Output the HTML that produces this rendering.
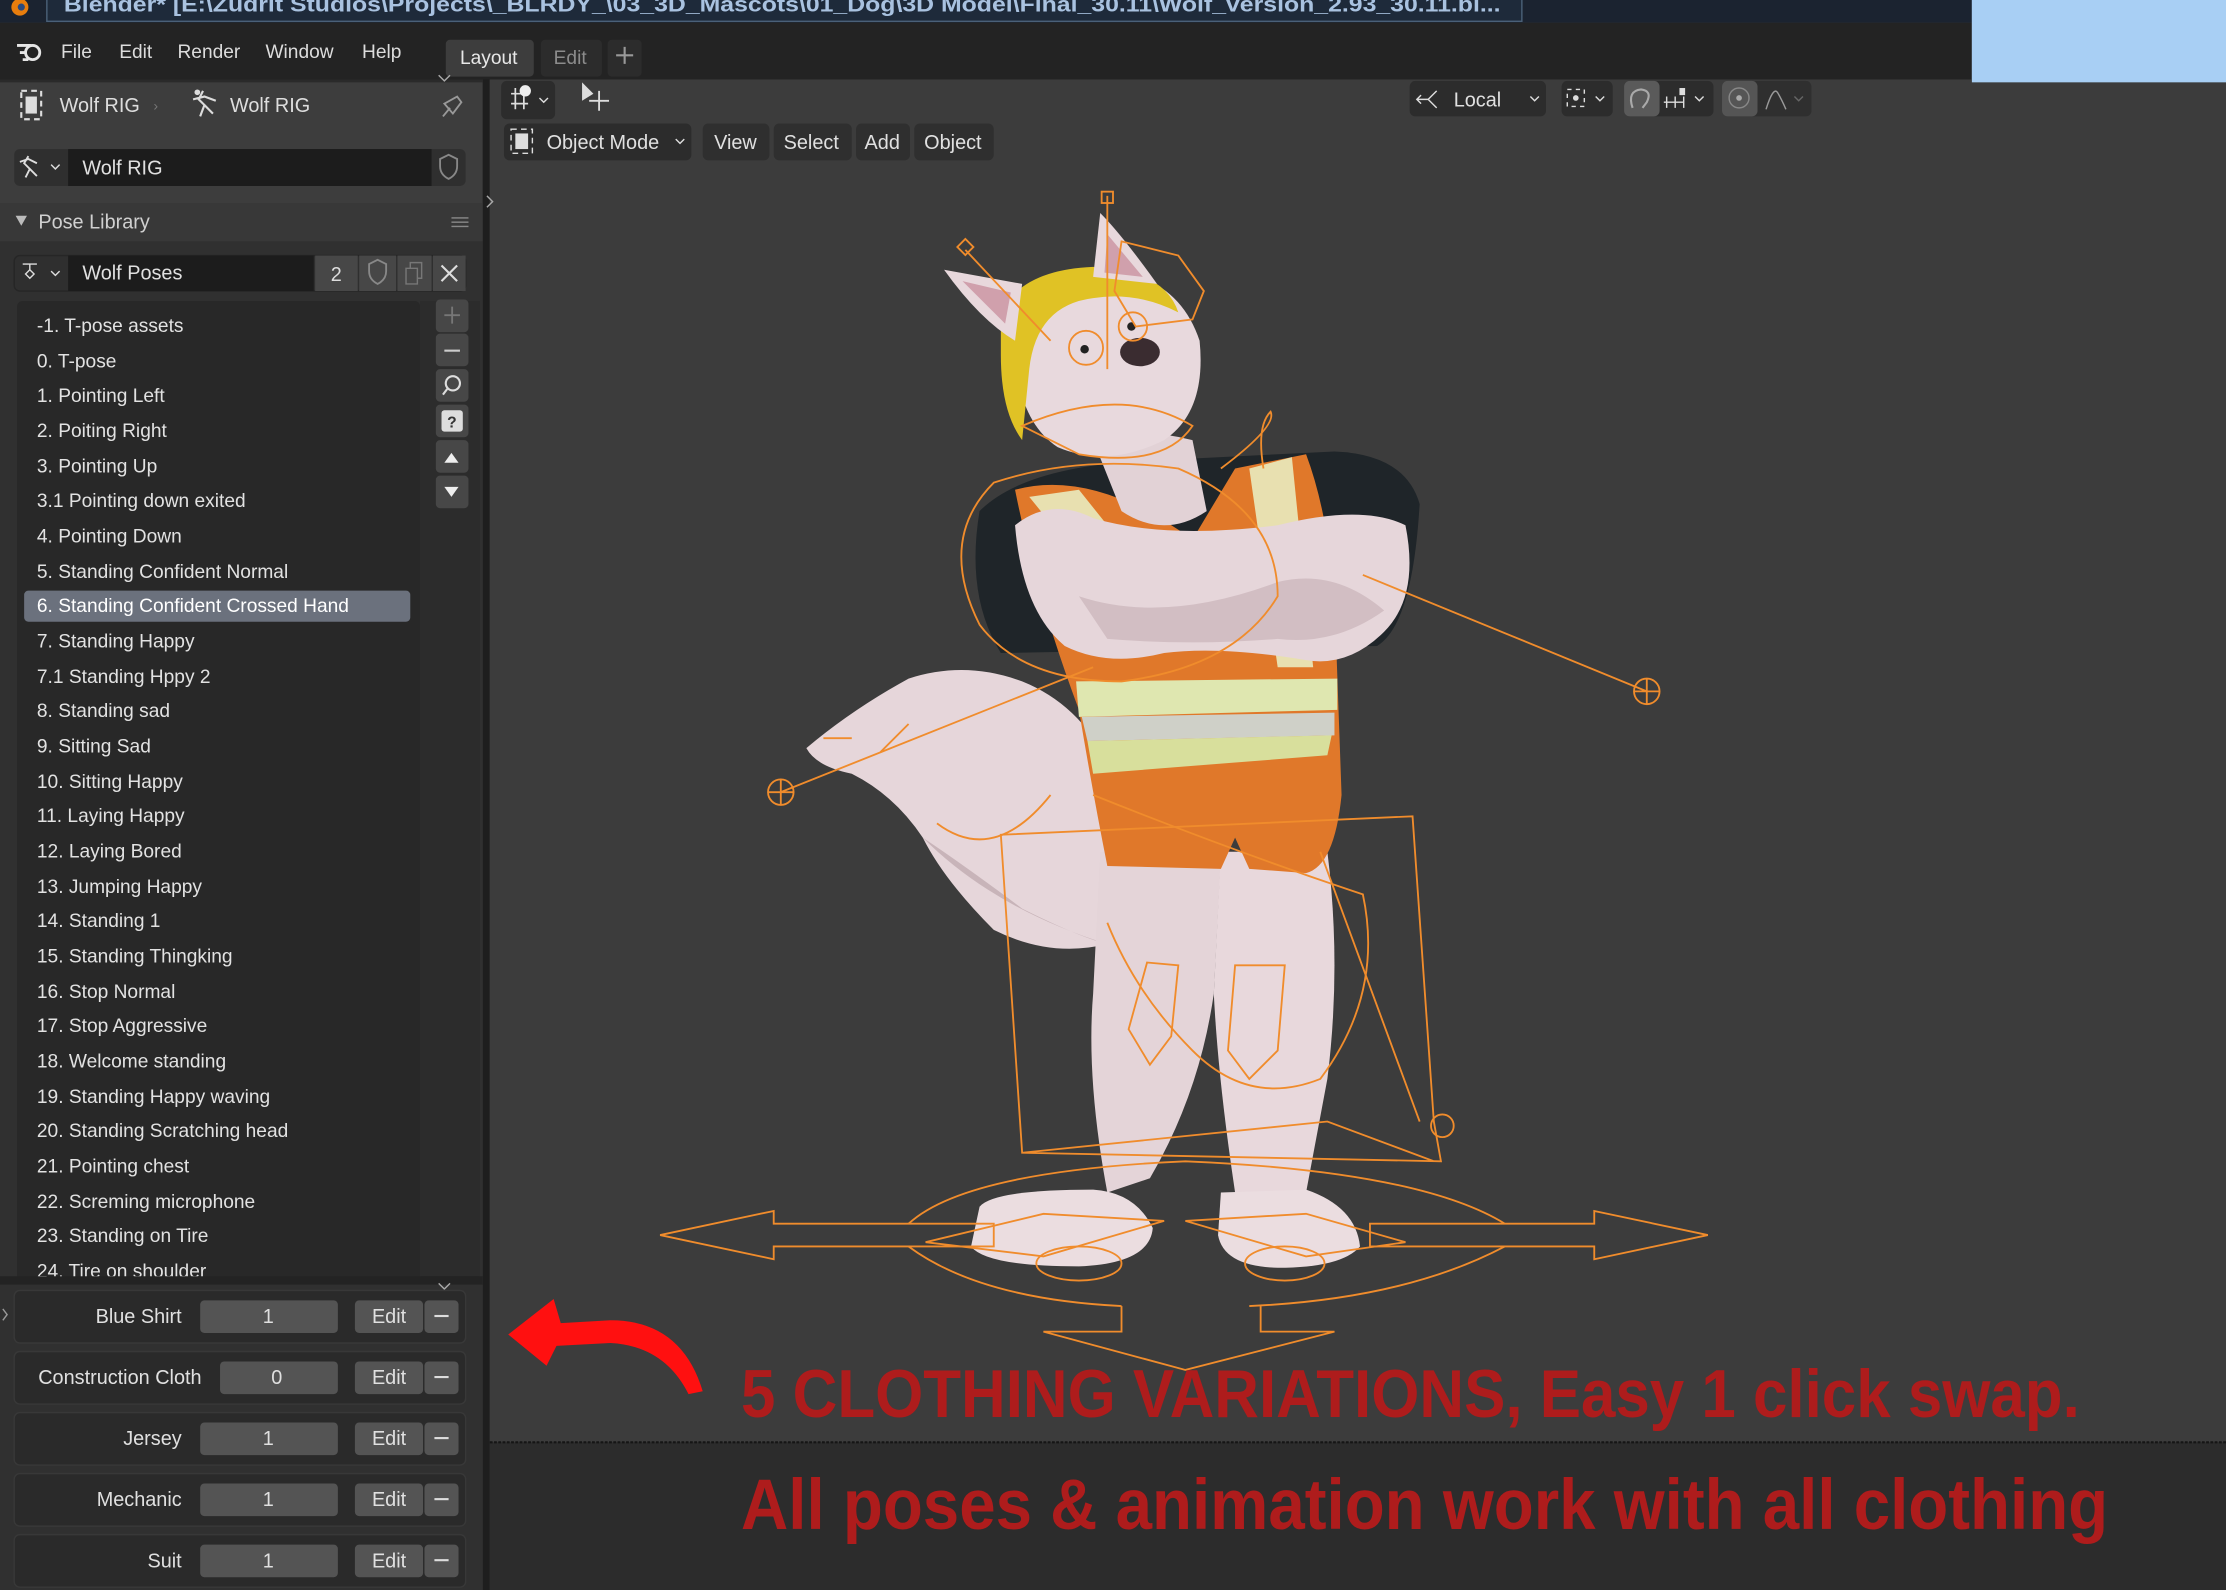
<!DOCTYPE html>
<html><head><meta charset="utf-8"><style>
html,body{margin:0;padding:0;background:#3c3c3c;overflow:hidden}
svg{display:block}
text{font-family:"Liberation Sans","DejaVu Sans",sans-serif}
</style></head><body>
<svg width="2226" height="1590" viewBox="0 0 1568 1120" xmlns="http://www.w3.org/2000/svg">
<rect x="0" y="0" width="1568" height="1120" fill="#3c3c3c"/>
<rect x="0" y="0" width="1568" height="16" fill="#1b2330"/>
<rect x="33" y="-4" width="1039" height="19" fill="#1e2a3a" stroke="#4a6078" stroke-width="1"/>
<text x="45" y="8" font-size="15" font-weight="bold" fill="#a9c2e0" textLength="1012" lengthAdjust="spacingAndGlyphs">Blender* [E:\Zudrit Studios\Projects\_BLRDY_\03_3D_Mascots\01_Dog\3D Model\Final_30.11\Wolf_version_2.93_30.11.bl...</text>
<circle cx="14" cy="5" r="6" fill="#e87d0d"/><circle cx="15" cy="5" r="2.5" fill="#2a4a80"/>
<rect x="0" y="16" width="1568" height="40" fill="#232323"/>
<rect x="1389" y="0" width="179" height="58" fill="#a8cff4"/>
<g fill="none" stroke="#e6e6e6" stroke-width="2"><circle cx="23" cy="37" r="5"/><path d="M12 32 L22 32 M14 37 L18 37 M16 42 L20 42"/></g>
<g font-size="13.5" fill="#dcdcdc">
<text x="43" y="41">File</text><text x="84" y="41">Edit</text><text x="125" y="41">Render</text><text x="187" y="41">Window</text><text x="255" y="41">Help</text>
</g>
<rect x="314" y="28" width="62" height="26" rx="3" fill="#3d3d3d"/>
<text x="324" y="45" font-size="13.5" fill="#e8e8e8">Layout</text>
<rect x="381" y="28" width="43" height="26" rx="3" fill="#2c2c2c"/>
<text x="390" y="45" font-size="13.5" fill="#8c8c8c">Edit</text>
<rect x="428" y="28" width="24" height="26" rx="3" fill="#2c2c2c"/>
<path d="M434 39 H446 M440 33 V45" stroke="#999" stroke-width="1.5"/>

<rect x="0" y="56" width="340" height="1064" fill="#3d3d3d"/>
<rect x="340" y="56" width="5" height="1064" fill="#1e1e1e"/>
<rect x="0" y="56" width="340" height="2" fill="#2a2a2a"/>
<path d="M309 53 l4 4 l4 -4" stroke="#aaa" fill="none"/>
<rect x="15" y="64" width="14" height="20" fill="none" stroke="#ddd" stroke-width="1.5" stroke-dasharray="4 3"/><rect x="18" y="68" width="8" height="12" fill="#ddd"/>
<text x="42" y="79" font-size="14" fill="#ddd">Wolf RIG</text>
<text x="108" y="78" font-size="10" fill="#777">›</text>
<path d="M143 64 l-3 6 l4 4 l-3 8 M144 74 l6 6 M136 70 l8 -2 l8 3" stroke="#ddd" fill="none" stroke-width="1.5"/><circle cx="139" cy="65" r="2" fill="#ddd"/>
<text x="162" y="79" font-size="14" fill="#ddd">Wolf RIG</text>
<path d="M312 82 l5 -6 M313 73 l9 -5 l3 4 l-6 8 z" stroke="#999" fill="none" stroke-width="1.3"/>
<rect x="10" y="105" width="318" height="26" rx="4" fill="#2f2f2f"/>
<rect x="48" y="105" width="256" height="26" fill="#1c1c1c"/>
<path d="M20 110 l-3 5 l4 4 l-3 6 M21 119 l5 5 M14 114 l6 -2 l6 3" stroke="#ddd" fill="none" stroke-width="1.3"/>
<path d="M36 116 l3 3 l3 -3" stroke="#ddd" fill="none"/>
<text x="58" y="123" font-size="14" fill="#e0e0e0">Wolf RIG</text>
<path d="M310 112 l6 -3 l6 3 v5 q0 6 -6 9 q-6 -3 -6 -9 z" stroke="#888" fill="none" stroke-width="1.3"/>
<rect x="0" y="143" width="340" height="27" fill="#383838"/>
<path d="M11 152 h8 l-4 7 z" fill="#bbb"/>
<text x="27" y="161" font-size="14" fill="#d0d0d0">Pose Library</text>
<g fill="#888"><rect x="318" y="153" width="12" height="1"/><rect x="318" y="156" width="12" height="1"/><rect x="318" y="159" width="12" height="1"/></g>
<rect x="0" y="170" width="340" height="735" fill="#303030"/>
<rect x="10" y="180" width="318" height="25" rx="4" fill="#2f2f2f" stroke="#262626"/>
<rect x="48" y="180" width="173" height="25" fill="#1c1c1c"/>
<rect x="222" y="180" width="30" height="25" fill="#474747"/>
<rect x="253" y="180" width="26" height="25" fill="#474747"/>
<rect x="280" y="180" width="24" height="25" fill="#474747"/>
<rect x="305" y="180" width="23" height="25" fill="#474747"/>
<path d="M16 186 h10 M21 186 v4 l-3 3 l3 3 l3 -3 l-3 -3" stroke="#ddd" fill="none"/>
<path d="M36 191 l3 3 l3 -3" stroke="#ddd" fill="none"/>
<text x="58" y="197" font-size="14" fill="#e0e0e0">Wolf Poses</text>
<text x="233" y="198" font-size="14" fill="#ddd">2</text>
<path d="M260 186 l6 -3 l6 3 v5 q0 6 -6 9 q-6 -3 -6 -9 z" stroke="#888" fill="none" stroke-width="1.3"/>
<path d="M286 189 h8 v11 h-8 z M289 189 v-4 h8 v11 h-3" stroke="#777" fill="none"/>
<path d="M311 187 l11 11 M322 187 l-11 11" stroke="#ddd" stroke-width="1.5"/>
<rect x="12" y="212" width="284" height="690" rx="4" fill="#282828"/>
<rect x="296" y="212" width="42" height="690" fill="#2c2c2c"/>
<rect x="17" y="416" width="272" height="22" rx="3" fill="#6b717d"/>
<g font-size="13.5" fill="#e2e2e2">
<text x="26" y="234">-1. T-pose assets</text>
<text x="26" y="259">0. T-pose</text>
<text x="26" y="283">1. Pointing Left</text>
<text x="26" y="308">2. Poiting Right</text>
<text x="26" y="333">3. Pointing Up</text>
<text x="26" y="357">3.1 Pointing down exited</text>
<text x="26" y="382">4. Pointing Down</text>
<text x="26" y="407">5. Standing Confident Normal</text>
<text x="26" y="431" fill="#fff">6. Standing Confident Crossed Hand</text>
<text x="26" y="456">7. Standing Happy</text>
<text x="26" y="481">7.1 Standing Hppy 2</text>
<text x="26" y="505">8. Standing sad</text>
<text x="26" y="530">9. Sitting Sad</text>
<text x="26" y="555">10. Sitting Happy</text>
<text x="26" y="579">11. Laying Happy</text>
<text x="26" y="604">12. Laying Bored</text>
<text x="26" y="629">13. Jumping Happy</text>
<text x="26" y="653">14. Standing 1</text>
<text x="26" y="678">15. Standing Thingking</text>
<text x="26" y="703">16. Stop Normal</text>
<text x="26" y="727">17. Stop Aggressive</text>
<text x="26" y="752">18. Welcome standing</text>
<text x="26" y="777">19. Standing Happy waving</text>
<text x="26" y="801">20. Standing Scratching head</text>
<text x="26" y="826">21. Pointing chest</text>
<text x="26" y="851">22. Screming microphone</text>
<text x="26" y="875">23. Standing on Tire</text>
<text x="26" y="900">24. Tire on shoulder</text>
</g>
<rect x="0" y="899" width="340" height="6" fill="#232323"/>
<g fill="#474747"><rect x="307" y="211" width="23" height="23" rx="3"/><rect x="307" y="235" width="23" height="23" rx="3"/><rect x="307" y="260" width="23" height="23" rx="3"/><rect x="307" y="285" width="23" height="23" rx="3"/><rect x="307" y="310" width="23" height="23" rx="3"/><rect x="307" y="335" width="23" height="23" rx="3"/></g>
<path d="M313 222 h11 M318.5 216 v12" stroke="#777" stroke-width="1.3"/>
<path d="M313 247 h11" stroke="#ccc" stroke-width="1.5"/>
<circle cx="319" cy="270" r="5" stroke="#ddd" fill="none" stroke-width="1.5"/><path d="M315 274 l-3 4" stroke="#ddd" stroke-width="1.5"/>
<rect x="311" y="289" width="15" height="15" rx="2" fill="#ddd"/><text x="315" y="301" font-size="11" fill="#333" font-weight="bold">?</text>
<path d="M313 326 l5 -7 l5 7 z" fill="#eee"/><path d="M313 343 l5 7 l5 -7 z" fill="#eee"/>
<rect x="0" y="905" width="340" height="215" fill="#303030"/>
<path d="M309 904 l4 4 l4 -4" stroke="#aaa" fill="none"/>
<path d="M2 922 l3 4 l-3 4" stroke="#999" fill="none"/>
<g font-size="14" fill="#e0e0e0">
<rect x="10" y="909" width="318" height="37" rx="4" fill="#2a2a2a" stroke="#383838"/>
<text x="128" y="932" text-anchor="end">Blue Shirt</text>
<rect x="141" y="916" width="97" height="23" rx="3" fill="#545454"/><text x="189" y="932" text-anchor="middle">1</text>
<rect x="10" y="952" width="318" height="37" rx="4" fill="#2a2a2a" stroke="#383838"/>
<text x="142" y="975" text-anchor="end">Construction Cloth</text>
<rect x="155" y="959" width="83" height="23" rx="3" fill="#545454"/><text x="195" y="975" text-anchor="middle">0</text>
<rect x="10" y="995" width="318" height="37" rx="4" fill="#2a2a2a" stroke="#383838"/>
<text x="128" y="1018" text-anchor="end">Jersey</text>
<rect x="141" y="1002" width="97" height="23" rx="3" fill="#545454"/><text x="189" y="1018" text-anchor="middle">1</text>
<rect x="10" y="1038" width="318" height="37" rx="4" fill="#2a2a2a" stroke="#383838"/>
<text x="128" y="1061" text-anchor="end">Mechanic</text>
<rect x="141" y="1045" width="97" height="23" rx="3" fill="#545454"/><text x="189" y="1061" text-anchor="middle">1</text>
<rect x="10" y="1081" width="318" height="37" rx="4" fill="#2a2a2a" stroke="#383838"/>
<text x="128" y="1104" text-anchor="end">Suit</text>
<rect x="141" y="1088" width="97" height="23" rx="3" fill="#545454"/><text x="189" y="1104" text-anchor="middle">1</text>
</g>
<g font-size="14" fill="#e0e0e0">
<g><rect x="250" y="916" width="48" height="23" rx="3" fill="#545454"/><rect x="299" y="916" width="24" height="23" rx="3" fill="#545454"/><text x="262" y="932">Edit</text><path d="M306 927 h10" stroke="#ddd" stroke-width="1.5"/></g>
<g transform="translate(0,43)"><rect x="250" y="916" width="48" height="23" rx="3" fill="#545454"/><rect x="299" y="916" width="24" height="23" rx="3" fill="#545454"/><text x="262" y="932">Edit</text><path d="M306 927 h10" stroke="#ddd" stroke-width="1.5"/></g>
<g transform="translate(0,86)"><rect x="250" y="916" width="48" height="23" rx="3" fill="#545454"/><rect x="299" y="916" width="24" height="23" rx="3" fill="#545454"/><text x="262" y="932">Edit</text><path d="M306 927 h10" stroke="#ddd" stroke-width="1.5"/></g>
<g transform="translate(0,129)"><rect x="250" y="916" width="48" height="23" rx="3" fill="#545454"/><rect x="299" y="916" width="24" height="23" rx="3" fill="#545454"/><text x="262" y="932">Edit</text><path d="M306 927 h10" stroke="#ddd" stroke-width="1.5"/></g>
<g transform="translate(0,172)"><rect x="250" y="916" width="48" height="23" rx="3" fill="#545454"/><rect x="299" y="916" width="24" height="23" rx="3" fill="#545454"/><text x="262" y="932">Edit</text><path d="M306 927 h10" stroke="#ddd" stroke-width="1.5"/></g>
</g>

<rect x="345" y="56" width="1223" height="960" fill="#3c3c3c"/>
<rect x="1389" y="0" width="179" height="58" fill="#a8cff4"/>
<rect x="345" y="1016" width="1223" height="104" fill="#2c2c2c"/>
<path d="M345 1016 H1568" stroke="#151515" stroke-width="1.5" stroke-dasharray="2 1"/>
<path d="M343 138 l4 4 l-4 4" stroke="#aaa" fill="none"/>
<rect x="353" y="57" width="38" height="27" rx="4" fill="#2c2c2c"/>
<path d="M360 66 h12 M360 73 h12 M363 62 v15 M369 62 v15" stroke="#ddd" stroke-width="1.2"/><circle cx="370" cy="64" r="4" fill="#eee"/>
<path d="M380 69 l3 3 l3 -3" stroke="#ddd" fill="none"/>
<path d="M410 58 v13 l8 -5 z" fill="#ddd"/><path d="M415 71 h14 M422 64 v14" stroke="#ddd" stroke-width="1.3"/>
<rect x="355" y="87" width="132" height="26" rx="4" fill="#2c2c2c"/>
<rect x="360" y="91" width="15" height="17" fill="none" stroke="#ddd" stroke-dasharray="4 3"/><rect x="363" y="94" width="9" height="11" fill="#ddd"/>
<text x="385" y="105" font-size="14" fill="#e0e0e0">Object Mode</text>
<path d="M476 98 l3 3 l3 -3" stroke="#ddd" fill="none"/>
<rect x="495" y="87" width="47" height="26" rx="4" fill="#2f2f2f"/>
<rect x="545" y="87" width="55" height="26" rx="4" fill="#2f2f2f"/>
<rect x="603" y="87" width="38" height="26" rx="4" fill="#2f2f2f"/>
<rect x="644" y="87" width="56" height="26" rx="4" fill="#2f2f2f"/>
<g font-size="14" fill="#e0e0e0"><text x="503" y="105">View</text><text x="552" y="105">Select</text><text x="609" y="105">Add</text><text x="651" y="105">Object</text></g>
<rect x="993" y="57" width="96" height="25" rx="4" fill="#2c2c2c"/>
<path d="M998 70 h8 M1001 67 l-3 3 l3 3 M1006 70 l6 -6 M1006 70 l6 6" stroke="#ddd" fill="none"/>
<text x="1024" y="75" font-size="14" fill="#e0e0e0">Local</text>
<path d="M1078 68 l3 3 l3 -3" stroke="#ddd" fill="none"/>
<rect x="1100" y="57" width="36" height="25" rx="4" fill="#2c2c2c"/>
<rect x="1104" y="63" width="12" height="12" fill="none" stroke="#ddd" stroke-dasharray="3 3"/><circle cx="1110" cy="69" r="2" fill="#ddd"/>
<path d="M1124 68 l3 3 l3 -3" stroke="#ddd" fill="none"/>
<rect x="1144" y="57" width="63" height="25" rx="4" fill="#2c2c2c"/><rect x="1144" y="57" width="25" height="25" rx="4" fill="#5a5a5a"/>
<path d="M1150 76 q-4 -12 6 -13 q8 1 4 9 l-3 4" stroke="#aaa" fill="none" stroke-width="1.5"/>
<path d="M1172 72 h14 M1174 68 v8 M1180 68 v8 M1186 68 v8" stroke="#ddd"/><rect x="1183" y="62" width="4" height="5" fill="#ddd"/>
<path d="M1194 68 l3 3 l3 -3" stroke="#ddd" fill="none"/>
<rect x="1213" y="57" width="63" height="25" rx="4" fill="#2f2f2f"/><rect x="1213" y="57" width="25" height="25" rx="4" fill="#555"/>
<circle cx="1225" cy="69" r="7" stroke="#888" fill="none"/><circle cx="1225" cy="69" r="2" fill="#aaa"/>
<path d="M1244 77 q5 -16 8 -12 q3 5 6 12" stroke="#999" fill="none"/>
<path d="M1264 68 l3 3 l3 -3" stroke="#666" fill="none"/>

<g>
<path d="M568 527 Q600 500 640 478 Q680 465 720 480 Q770 500 790 560 Q800 620 780 665 Q740 675 700 655 Q665 620 650 590 Q630 560 600 545 Q575 540 568 527 Z" fill="#e6d6da"/>
<path d="M650 590 Q700 640 780 665 Q760 660 720 640 Q680 610 650 590Z" fill="#c8b4b9"/>
<path d="M775 600 L860 605 L855 700 Q845 770 810 830 L780 840 Q765 760 770 700 Z" fill="#e4d4d8"/>
<path d="M860 600 L935 600 Q945 680 935 760 L920 840 L870 840 Q858 760 855 700 Z" fill="#e8d8dc"/>
<path d="M690 850 Q700 838 770 838 Q800 840 812 865 Q810 890 760 892 Q695 892 684 878 Z" fill="#ebdde0"/>
<path d="M860 840 L920 838 Q955 850 958 878 Q945 893 900 893 Q862 892 858 870 Z" fill="#ebdde0"/>
<path d="M690 360 Q720 330 800 325 L940 318 Q990 320 1000 355 Q995 440 970 455 L705 460 Q680 420 690 360 Z" fill="#1f2529"/>
<path d="M715 345 Q770 330 840 380 L870 330 L920 320 Q935 360 940 420 L945 560 Q940 610 920 615 L880 612 L870 590 L860 612 L780 610 Q770 560 760 500 Q730 420 715 345 Z" fill="#e0782a"/>
<path d="M725 350 L760 345 L820 420 L790 430 Z" fill="#e8e0b0"/>
<path d="M880 330 L910 322 L925 470 L900 470 Z" fill="#e8e0b0"/>
<path d="M758 480 L942 478 L942 500 L760 505 Z" fill="#dfe7b0"/>
<path d="M762 505 L940 502 L940 518 L766 522 Z" fill="#cfd0c8"/>
<path d="M766 522 L938 518 L935 532 L770 545 Z" fill="#d8df9c"/>
<path d="M715 370 Q740 350 770 365 Q820 380 900 370 Q960 355 990 370 Q1000 420 975 445 Q950 470 920 465 Q860 455 820 460 Q780 470 750 455 Q720 430 715 370 Z" fill="#e6d6da"/>
<path d="M760 420 Q820 440 900 410 Q940 400 975 430 Q940 455 900 450 Q840 455 780 450 Z" fill="#d2bec3"/>
<path d="M770 310 Q800 300 840 310 L850 360 Q820 380 790 360 Z" fill="#e2d2d6"/>
<path d="M715 240 Q730 190 780 190 Q830 195 845 240 Q850 290 820 310 Q780 330 745 315 Q715 295 715 240 Z" fill="#e8d9dd"/>
<path d="M705 220 Q720 190 770 188 Q820 190 830 220 Q800 205 770 210 Q730 215 725 260 L720 310 Q705 290 705 250 Z" fill="#e0c225"/>
<path d="M665 190 L720 200 L715 240 Q690 225 665 190 Z" fill="#e8d8dc"/><path d="M678 198 L712 206 L708 228 Z" fill="#d0a0ac"/>
<path d="M775 150 Q790 165 815 200 L770 195 Z" fill="#e8d8dc"/><path d="M780 165 L805 195 L778 192 Z" fill="#d0a0ac"/>
<ellipse cx="803" cy="248" rx="14" ry="10" fill="#3a2c30"/>
<circle cx="764" cy="246" r="3" fill="#222"/><circle cx="797" cy="230" r="3" fill="#222"/>
<g fill="none" stroke="#f08c2c" stroke-width="1.3">
<path d="M465 870 L545 853 L545 862 L700 862 L700 878 L545 878 L545 887 Z"/>
<path d="M1203 870 L1123 853 L1123 862 L965 862 L965 878 L1123 878 L1123 887 Z"/>
<path d="M640 862 Q680 825 835 818 Q1000 825 1060 862"/>
<path d="M640 878 Q690 915 790 920 M880 920 Q990 915 1060 878"/>
<path d="M790 920 L790 938 L735 938 L835 965 L940 938 L888 938 L888 920"/>
<path d="M652 875 L735 855 L820 860 L735 885 Z"/><path d="M835 860 L920 855 L990 875 L920 885 Z"/>
<path d="M705 588 L995 575 L1010 790 L1015 818 L720 812 Z M705 588 L720 812 M930 600 L1000 790 M720 812 L935 790 L1010 818"/>
<path d="M550 558 L770 470 M1160 487 L960 405"/>
<circle cx="550" cy="558" r="9"/><path d="M541 558 h18 M550 549 v18"/>
<circle cx="1160" cy="487" r="9"/><path d="M1151 487 h18 M1160 478 v18"/>
<circle cx="1016" cy="793" r="8"/>
<path d="M780 138 L780 260 M680 176 L740 240"/><rect x="776" y="135" width="8" height="8"/><rect x="676" y="170" width="8" height="8" transform="rotate(45 680 174)"/>
<path d="M790 170 L830 180 L848 205 L840 225 L800 230 L785 205 Z"/>
<path d="M700 340 Q660 380 690 440 Q720 480 790 480 Q870 470 900 420 Q900 360 830 330 Q760 320 700 340 Z"/>
<path d="M860 330 Q900 300 895 290 Q885 300 890 330"/>
<path d="M770 560 Q870 600 960 630 Q975 700 930 760 Q880 780 840 740 Q800 700 780 650"/>
<path d="M870 680 L905 680 L900 740 L880 760 L865 740 Z"/><path d="M808 678 L830 680 L825 730 L810 750 L795 725 Z"/>
<ellipse cx="760" cy="890" rx="30" ry="12"/><ellipse cx="905" cy="890" rx="28" ry="12"/>
<path d="M720 300 Q790 270 840 300 Q820 330 760 320 Z"/>
<circle cx="765" cy="245" r="12"/><circle cx="798" cy="230" r="10"/>
<path d="M740 560 Q700 610 660 580 M600 520 L580 520 M640 510 L620 530"/>
</g>
</g>

<path d="M495 980 Q480 930 430 930 L395 932 L390 915 L358 940 L385 962 L392 948 L430 946 Q468 948 485 982 Z" fill="#ff1010"/>
<text x="522" y="998" font-size="48" font-weight="bold" fill="#ae1c1c" textLength="943" lengthAdjust="spacingAndGlyphs">5 CLOTHING VARIATIONS, Easy 1 click swap.</text>
<text x="522" y="1077" font-size="50" font-weight="bold" fill="#ae1c1c" textLength="963" lengthAdjust="spacingAndGlyphs">All poses &amp; animation work with all clothing</text>
</svg>
</body></html>
